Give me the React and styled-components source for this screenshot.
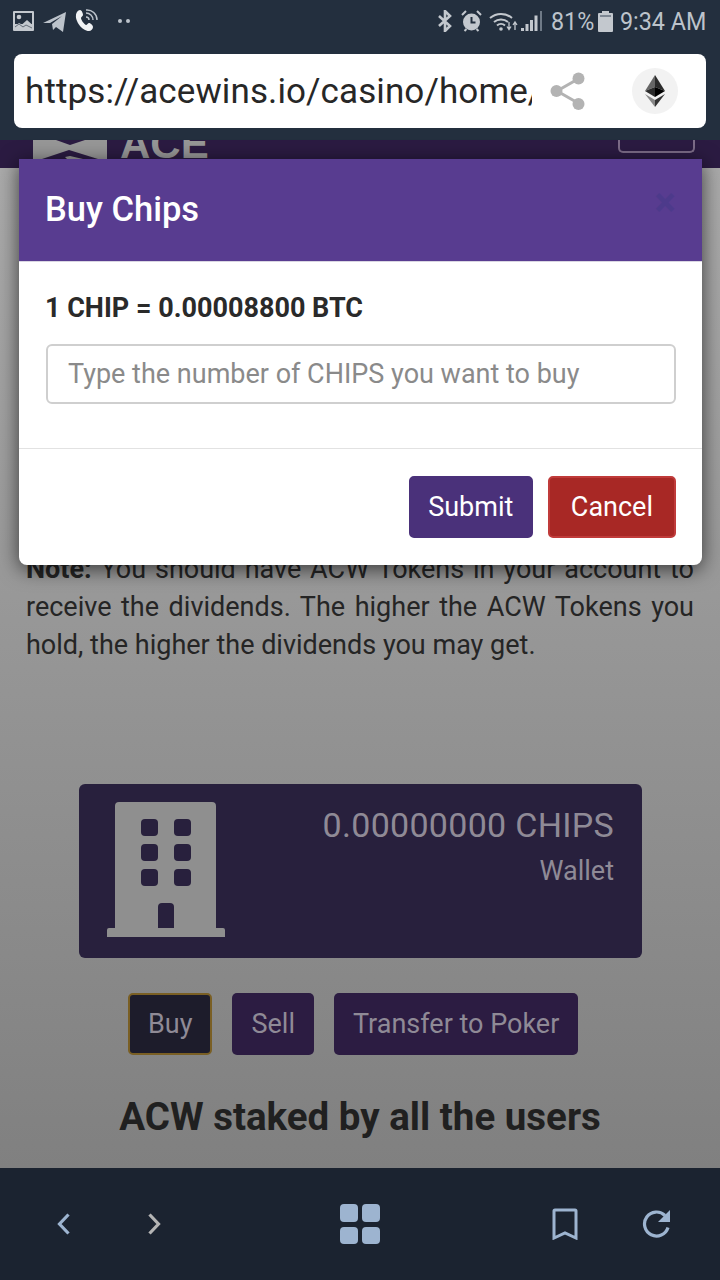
import React from "react";
import styled, { createGlobalStyle } from "styled-components";

const Global = createGlobalStyle`
  html, body { margin: 0; padding: 0; background: #8a8a8a; }
  * { box-sizing: border-box; }
  body { font-family: Roboto, "Liberation Sans", sans-serif; }
`;

const Screen = styled.div`
  position: relative;
  width: 720px;
  height: 1280px;
  overflow: hidden;
  display: flex;
  flex-direction: column;
`;

const TopChrome = styled.header`
  height: 140px;
  flex: none;
  background: #232f3e;
  padding: 0 14px;
  display: flex;
  flex-direction: column;
`;

const StatusBar = styled.div`
  height: 54px;
  flex: none;
  margin: 0 -14px;
  padding: 0 15px 12px 13px;
  display: flex;
  align-items: center;
  justify-content: space-between;
  color: #bcc3cb;
`;

const StatusGroup = styled.div`
  display: flex;
  align-items: center;
`;

const StatusSlot = styled.div`
  display: flex;
  align-items: center;
  margin-left: ${(p) => p.$left || 0}px;
  width: ${(p) => (p.$width ? `${p.$width}px` : "auto")};
`;

const StatusText = styled.span`
  font-size: 26.5px;
  line-height: 30px;
  transform: scaleX(0.88);
  transform-origin: left center;
  white-space: nowrap;
`;

const UrlBar = styled.div`
  height: 74px;
  flex: none;
  background: #fff;
  border-radius: 8px;
  padding-left: 11px;
  display: flex;
  align-items: center;
`;

const UrlText = styled.div`
  width: 507px;
  overflow: hidden;
  white-space: nowrap;
  font-size: 35px;
  color: #272727;
  letter-spacing: 0.1px;
`;

const ShareSlot = styled.div`
  margin-left: 18px;
  display: flex;
`;

const EthBadge = styled.div`
  width: 46px;
  height: 46px;
  margin-left: 46px;
  border-radius: 50%;
  background: #f2f2f2;
  display: flex;
  align-items: center;
  justify-content: center;
`;

const SiteHeader = styled.div`
  height: 28px;
  flex: none;
  background: #2b1b42;
  overflow: hidden;
  padding: 0 25px 0 33px;
  display: flex;
  justify-content: space-between;
  align-items: flex-start;
`;

const LogoWrap = styled.div`
  height: 25px;
  display: flex;
  gap: 13px;
  align-items: flex-end;
`;

const LogoMark = styled.svg`
  margin-bottom: 6px;
  flex: none;
`;

const LogoWord = styled.span`
  font-size: 42px;
  line-height: 42px;
  font-weight: 700;
  color: #979797;
  font-family: "Liberation Sans", sans-serif;
`;

const MenuToggle = styled.div`
  width: 77px;
  height: 13px;
  border: 2px solid #7c6c88;
  border-top: 0;
  border-radius: 0 0 5px 5px;
`;

const Page = styled.main`
  flex: 1;
  min-height: 0;
  background: linear-gradient(#aaaaaa, #808080);
  padding-top: 382px;
  overflow: hidden;
`;

const Note = styled.p`
  margin: 0 26px;
  font-size: 27px;
  line-height: 38px;
  color: #252525;
  text-align: justify;
  strong { font-weight: 700; }
`;

const WalletCard = styled.section`
  width: 563px;
  height: 174px;
  margin: 120px 0 0 79px;
  background: #28203d;
  border-radius: 6px;
  padding: 18px 28px 0 28px;
  display: flex;
  justify-content: space-between;
`;

const WalletInfo = styled.div`
  padding-top: 2px;
  text-align: right;
  color: #8f8a96;
`;

const WalletAmount = styled.div`
  font-size: 34px;
  line-height: 42px;
  letter-spacing: 0.3px;
`;

const WalletLabel = styled.div`
  font-size: 27px;
  line-height: 36px;
  margin-top: 7px;
`;

const ActionRow = styled.div`
  display: flex;
  gap: 20px;
  margin-top: 35px;
  padding-left: 128px;
`;

const ActionButton = styled.div`
  height: 62px;
  padding: 0 ${(p) => (p.$active ? 18 : 19)}px;
  display: flex;
  align-items: center;
  border-radius: 5px;
  font-size: 27px;
  color: #8f8a96;
  background: ${(p) => (p.$active ? "#1d1c2b" : "#2c1c42")};
  border: ${(p) => (p.$active ? "2px solid #7a5f24" : "0")};
`;

const Heading = styled.h2`
  margin: 38px 0 0;
  text-align: center;
  font-size: 38.5px;
  line-height: 48px;
  font-weight: 700;
  color: #202020;
  white-space: nowrap;
`;

const BottomBar = styled.nav`
  height: 112px;
  flex: none;
  background: #1b2330;
  display: grid;
  grid-template-columns: 1fr auto 1fr;
  align-items: center;
`;

const NavGroup = styled.div`
  display: flex;
  align-items: center;
  justify-content: ${(p) => (p.$end ? "flex-end" : "flex-start")};
  gap: ${(p) => p.$gap}px;
  padding: ${(p) => (p.$end ? "0 48px 0 0" : "0 0 0 57px")};
`;

const Modal = styled.div`
  position: absolute;
  left: 19px;
  top: 159px;
  width: 683px;
  height: 406px;
  background: #fff;
  border-radius: 0 0 8px 8px;
  box-shadow: 0 4px 20px rgba(0, 0, 0, 0.65);
  display: flex;
  flex-direction: column;
`;

const ModalHead = styled.div`
  height: 103px;
  flex: none;
  background: #583c90;
  border-bottom: 1px solid #d9d6e2;
  padding: 0 25px 0 26px;
  display: flex;
  align-items: center;
  justify-content: space-between;
`;

const ModalTitle = styled.h3`
  margin: 0 0 2px;
  font-size: 34.5px;
  font-weight: 500;
  color: #fff;
`;

const Close = styled.span`
  font-size: 40px;
  line-height: 1;
  font-weight: 700;
  color: #4d3a8b;
  margin: 0 0 14px;
  width: 24px;
  display: flex;
  justify-content: center;
`;

const ModalBody = styled.div`
  height: 187px;
  flex: none;
  border-bottom: 1px solid #e2e2e2;
  padding: 28px 26px 0 27px;
`;

const Rate = styled.div`
  margin-left: -1px;
  font-size: 27px;
  line-height: 36px;
  font-weight: 700;
  color: #2a2a2a;
`;

const ChipInput = styled.input`
  display: block;
  width: 100%;
  height: 60px;
  margin-top: 18px;
  padding: 0 20px;
  border: 2px solid #cfcfcf;
  border-radius: 6px;
  font: 400 27px Roboto, sans-serif;
  color: #333;
  &::placeholder { color: #8a8a8a; opacity: 1; }
`;

const ModalFoot = styled.div`
  flex: 1;
  padding: 27px 26px 0 0;
  display: flex;
  justify-content: flex-end;
  gap: 15px;
`;

const ModalButton = styled.button`
  height: 62px;
  padding: 0 ${(p) => (p.$danger ? 21 : 17.5)}px;
  border-radius: 5px;
  border: 2px solid ${(p) => (p.$danger ? "#c03b3a" : "#4a317a")};
  background: ${(p) => (p.$danger ? "#a82825" : "#4a317a")};
  color: #fff;
  font: 400 27px Roboto, sans-serif;
`;

const ImageIcon = () => (
  <svg width="21" height="20" viewBox="0 0 21 20">
    <rect width="21" height="20" rx="1" fill="#c3c8ce" />
    <rect x="2" y="2" width="17" height="11" fill="#232f3e" />
    <circle cx="6" cy="6" r="2.300" fill="#c3c8ce" />
    <path d="M2 15l4-3 3 1.500 5-4.500 5 4.500V18H2z" fill="#c3c8ce" />
    <path d="M2 16l4-3 4 3 3-2 6 3" stroke="#232f3e" strokeWidth="1" fill="none" opacity="0.6" />
  </svg>
);

const TelegramIcon = () => (
  <svg width="23" height="21" viewBox="0 0 23 21">
    <path d="M0 12 23 1l-3 20-7-5-3 3-1-6 10-8-12 7z" fill="#bcc3cb" />
  </svg>
);

const WifiCallIcon = () => (
  <svg width="25" height="24" viewBox="0 0 25 24" fill="none">
    <path
      d="M5 1c2 0 3 4 3 5s-2 2-2 3c0 2 3 6 5 7 1 0 2-2 3-2s4 2 4 4c0 2-2 4-4 4C7 22 0 12 1 6c0-2 2-5 4-5z"
      fill="#f0f2f4"
    />
    <path d="M11 8a3 3 0 0 1 3 3M11 4a7 7 0 0 1 7 7M11 1a10 10 0 0 1 11 10" stroke="#bcc3cb" strokeWidth="1.500" />
  </svg>
);

const Dots = () => (
  <svg width="14" height="6" viewBox="0 0 14 6">
    <circle cx="3" cy="3" r="2" fill="#bcc3cb" />
    <circle cx="11" cy="3" r="2" fill="#bcc3cb" />
  </svg>
);

const BluetoothIcon = () => (
  <svg width="14" height="22" viewBox="0 0 14 22" fill="none">
    <path d="M1 6l11 10-5 5V1l5 5L1 16" stroke="#c3c8ce" strokeWidth="2.600" />
  </svg>
);

const AlarmIcon = () => (
  <svg width="21" height="22" viewBox="0 0 21 22">
    <circle cx="10.500" cy="12" r="8.500" fill="#c3c8ce" />
    <path d="M10.500 7v5.500h4" stroke="#232f3e" strokeWidth="2" fill="none" />
    <path d="M1 5l4-4M20 5l-4-4M3.500 21l2-2M17.500 21l-2-2" stroke="#c3c8ce" strokeWidth="2" />
  </svg>
);

const SignalIcon = () => (
  <svg width="54" height="22" viewBox="0 0 54 22" fill="none">
    <path d="M1 8a17 17 0 0 1 22 0M5 12a11 11 0 0 1 14 0M8 15.500a6 6 0 0 1 8 0" stroke="#c3c8ce" strokeWidth="2" />
    <circle cx="12" cy="19" r="1.800" fill="#c3c8ce" />
    <path d="M20 12v7M18 16.500l2 3 2-3M26 20v-7M24 15l2-3 2 3" stroke="#c3c8ce" strokeWidth="1.300" />
    <path d="M32 21h3v-3h-3zM36.500 21h3v-7h-3zM41 21h3V10h-3zM45.500 21h3V5.500h-3z" fill="#c3c8ce" />
    <path d="M51 21h2V1h-2z" fill="#6f7a87" />
  </svg>
);

const BatteryIcon = () => (
  <svg width="15" height="21" viewBox="0 0 15 21">
    <path d="M4 0h7v2h3a1 1 0 0 1 1 1v17a1 1 0 0 1-1 1H1a1 1 0 0 1-1-1V3a1 1 0 0 1 1-1h3z" fill="#c3c8ce" />
    <rect x="2" y="4" width="11" height="2" fill="#7d8793" />
  </svg>
);

const ShareIcon = () => (
  <svg width="36" height="38" viewBox="0 0 36 38" fill="none">
    <path d="M28 7 7 19l21 12" stroke="#b3b3b3" strokeWidth="3" />
    <circle cx="28.500" cy="6.500" r="6" fill="#b3b3b3" />
    <circle cx="6.500" cy="19" r="6" fill="#b3b3b3" />
    <circle cx="28.500" cy="32" r="6" fill="#b3b3b3" />
  </svg>
);

const EthIcon = () => (
  <svg width="20" height="32" viewBox="0 0 20 32">
    <path d="M10 0 0 16l10-4z" fill="#666" />
    <path d="M10 0l10 16-10-4z" fill="#2b2b2b" />
    <path d="M0 16l10-4v10z" fill="#2b2b2b" />
    <path d="M20 16l-10-4v10z" fill="#000" />
    <path d="M0 19 10 25v7z" fill="#888" />
    <path d="M20 19 10 25v7z" fill="#333" />
  </svg>
);

const LogoIcon = () => (
  <LogoMark width="74" height="19" viewBox="0 0 74 19">
    <rect width="74" height="19" fill="#979797" />
    <path d="M23 0l14 5 15-5z" fill="#2b1b42" />
    <path d="M9 19l27-9 29 9z" fill="#2b1b42" />
    <path d="M32 17l5-1 13 3H34z" fill="#979797" />
  </LogoMark>
);

const BuildingIcon = () => (
  <svg width="118" height="135" viewBox="0 0 118 135">
    <path
      d="M8 4a4 4 0 0 1 4-4h93a4 4 0 0 1 4 4v122h7a2 2 0 0 1 2 2v7H0v-7a2 2 0 0 1 2-2h6z"
      fill="#8f8f8f"
    />
    <g fill="#28203d">
      <rect x="34" y="17" width="17" height="17" rx="4" />
      <rect x="67" y="17" width="17" height="17" rx="4" />
      <rect x="34" y="42" width="17" height="17" rx="4" />
      <rect x="67" y="42" width="17" height="17" rx="4" />
      <rect x="34" y="67" width="17" height="17" rx="4" />
      <rect x="67" y="67" width="17" height="17" rx="4" />
      <path d="M51 126v-21a4 4 0 0 1 4-4h8a4 4 0 0 1 4 4v21z" />
    </g>
  </svg>
);

const navColor = "#9db4d0";

const Chevron = ({ dir, color }) => (
  <svg width="13" height="22" viewBox="0 0 13 22" fill="none">
    <path d={dir === "left" ? "M11.500 1.500 2.500 11l9 9.500" : "M1.500 1.500l9 9.500-9 9.500"} stroke={color} strokeWidth="3.200" />
  </svg>
);

const TabsIcon = () => (
  <svg width="40" height="40" viewBox="0 0 40 40" fill={navColor}>
    <rect x="0" y="0" width="18" height="18" rx="4" />
    <rect x="22" y="0" width="18" height="18" rx="4" />
    <rect x="0" y="23" width="18" height="17" rx="4" />
    <rect x="22" y="23" width="18" height="17" rx="4" />
  </svg>
);

const BookmarkIcon = () => (
  <svg width="26" height="32" viewBox="0 0 26 32" fill="none">
    <path d="M2 30V3a1 1 0 0 1 1-1h20a1 1 0 0 1 1 1v27l-11-5z" stroke={navColor} strokeWidth="3" />
  </svg>
);

const ReloadIcon = () => (
  <svg width="30" height="30" viewBox="0 0 30 30" fill="none">
    <path d="M23 6.500a12 12 0 1 0 3 12" stroke={navColor} strokeWidth="3.200" />
    <path d="M28 1v12H16z" fill={navColor} />
  </svg>
);

export default function App() {
  return (
    <Screen>
      <Global />
      <TopChrome>
        <StatusBar>
          <StatusGroup>
            <StatusSlot><ImageIcon /></StatusSlot>
            <StatusSlot $left={9}><TelegramIcon /></StatusSlot>
            <StatusSlot $left={9}><WifiCallIcon /></StatusSlot>
            <StatusSlot $left={17}><Dots /></StatusSlot>
          </StatusGroup>
          <StatusGroup>
            <StatusSlot><BluetoothIcon /></StatusSlot>
            <StatusSlot $left={9}><AlarmIcon /></StatusSlot>
            <StatusSlot $left={7}><SignalIcon /></StatusSlot>
            <StatusSlot $left={8} $width={41}><StatusText>81%</StatusText></StatusSlot>
            <StatusSlot $left={6}><BatteryIcon /></StatusSlot>
            <StatusSlot $left={7} $width={85}><StatusText>9:34 AM</StatusText></StatusSlot>
          </StatusGroup>
        </StatusBar>
        <UrlBar>
          <UrlText>https://acewins.io/casino/home/</UrlText>
          <ShareSlot>
            <ShareIcon />
          </ShareSlot>
          <EthBadge>
            <EthIcon />
          </EthBadge>
        </UrlBar>
      </TopChrome>

      <SiteHeader>
        <LogoWrap>
          <LogoIcon />
          <LogoWord>ACE</LogoWord>
        </LogoWrap>
        <MenuToggle />
      </SiteHeader>

      <Page>
        <Note>
          <strong>Note:</strong> You should have ACW Tokens in your account to receive the dividends. The higher the ACW
          Tokens you hold, the higher the dividends you may get.
        </Note>
        <WalletCard>
          <BuildingIcon />
          <WalletInfo>
            <WalletAmount>0.00000000 CHIPS</WalletAmount>
            <WalletLabel>Wallet</WalletLabel>
          </WalletInfo>
        </WalletCard>
        <ActionRow>
          <ActionButton $active>Buy</ActionButton>
          <ActionButton>Sell</ActionButton>
          <ActionButton>Transfer to Poker</ActionButton>
        </ActionRow>
        <Heading>ACW staked by all the users</Heading>
      </Page>

      <BottomBar>
        <NavGroup $gap={78}>
          <Chevron dir="left" color={navColor} />
          <Chevron dir="right" color="#b4b4b4" />
        </NavGroup>
        <TabsIcon />
        <NavGroup $end $gap={64}>
          <BookmarkIcon />
          <ReloadIcon />
        </NavGroup>
      </BottomBar>

      <Modal>
        <ModalHead>
          <ModalTitle>Buy Chips</ModalTitle>
          <Close>×</Close>
        </ModalHead>
        <ModalBody>
          <Rate>1 CHIP = 0.00008800 BTC</Rate>
          <ChipInput placeholder="Type the number of CHIPS you want to buy" />
        </ModalBody>
        <ModalFoot>
          <ModalButton>Submit</ModalButton>
          <ModalButton $danger>Cancel</ModalButton>
        </ModalFoot>
      </Modal>
    </Screen>
  );
}
